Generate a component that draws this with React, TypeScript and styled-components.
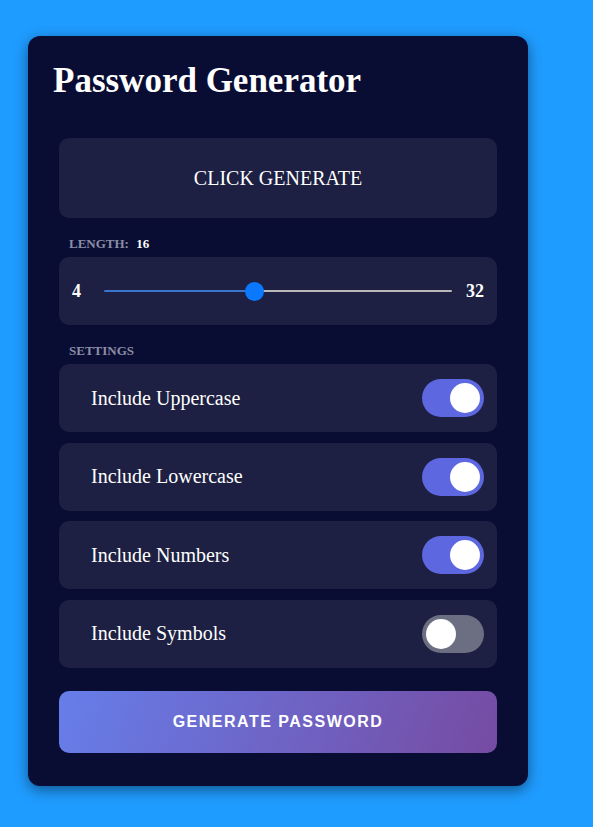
import { useState } from "react";
import styled, { createGlobalStyle } from "styled-components";

const GlobalStyle = createGlobalStyle`
  body {
    margin: 0;
    background: #1f9cff;
    font-family: "Liberation Serif", "Times New Roman", serif;
  }
`;

const MIN = 4;
const MAX = 32;

const options = [
  { key: "upper", label: "Include Uppercase" },
  { key: "lower", label: "Include Lowercase" },
  { key: "numbers", label: "Include Numbers" },
  { key: "symbols", label: "Include Symbols" },
];

export default function App() {
  const [length, setLength] = useState(16);
  const [flags, setFlags] = useState<Record<string, boolean>>({
    upper: true,
    lower: true,
    numbers: true,
    symbols: false,
  });

  const pct = ((length - MIN) / (MAX - MIN)) * 100;

  return (
    <>
      <GlobalStyle />
      <SPage>
        <SCard>
          <STitle>Password Generator</STitle>
          <SBody>
            <SResult>CLICK GENERATE</SResult>

            <SLabel>
              Length: <SValue>{length}</SValue>
            </SLabel>
            <SSliderBox>
              <SBound>{MIN}</SBound>
              <SRange
                type="range"
                min={MIN}
                max={MAX}
                value={length}
                onChange={(e) => setLength(Number(e.target.value))}
                style={{
                  background: `linear-gradient(to right, #3a74cc ${pct}%, #b8b8b8 ${pct}%)`,
                }}
              />
              <SBound>{MAX}</SBound>
            </SSliderBox>

            <SLabel>Settings</SLabel>
            <SSettings>
              {options.map((o) => (
                <SSetting key={o.key}>
                  <SSettingText>{o.label}</SSettingText>
                  <SSwitch
                    $on={flags[o.key]}
                    onClick={() => setFlags({ ...flags, [o.key]: !flags[o.key] })}
                  >
                    <SKnob />
                  </SSwitch>
                </SSetting>
              ))}
            </SSettings>

            <SGenerate>Generate Password</SGenerate>
          </SBody>
        </SCard>
      </SPage>
    </>
  );
}

const SPage = styled.div`
  padding: 36px 0 41px 28px;
`;

const SCard = styled.div`
  width: 500px;
  box-sizing: border-box;
  padding: 25px 25px 33px;
  background: #0a0d33;
  border-radius: 12px;
  box-shadow: 0 4px 14px rgba(0, 0, 0, 0.45);
`;

const STitle = styled.h1`
  margin: 0;
  font-size: 35px;
  font-weight: bold;
  color: #fff;
  line-height: 39px;
`;

const SBody = styled.div`
  padding: 38px 6px 0;
`;

const SResult = styled.div`
  height: 80px;
  display: flex;
  align-items: center;
  justify-content: center;
  background: #1d2042;
  border-radius: 10px;
  color: #fff;
  font-size: 20px;
`;

const SLabel = styled.div`
  margin: 19px 0 7px 10px;
  font-size: 13px;
  line-height: 13px;
  font-weight: bold;
  text-transform: uppercase;
  color: #8b8ea6;
`;

const SValue = styled.span`
  margin-left: 4px;
  color: #fff;
`;

const SSliderBox = styled.div`
  height: 68px;
  display: flex;
  align-items: center;
  padding: 0 13px;
  background: #1d2042;
  border-radius: 10px;
`;

const SBound = styled.span`
  color: #fff;
  font-size: 18px;
  font-weight: bold;
  width: 24px;
  &:last-child {
    text-align: right;
  }
`;

const SRange = styled.input`
  flex: 1;
  margin: 0 8px;
  height: 2.5px;
  appearance: none;
  -webkit-appearance: none;
  border-radius: 2px;
  outline: none;

  &::-webkit-slider-thumb {
    -webkit-appearance: none;
    width: 19px;
    height: 19px;
    border-radius: 50%;
    background: #0a79ff;
    cursor: pointer;
  }
`;

const SSettings = styled.div`
  display: flex;
  flex-direction: column;
  gap: 10.5px;
`;

const SSetting = styled.div`
  height: 68px;
  display: flex;
  align-items: center;
  justify-content: space-between;
  padding: 0 13px 0 32px;
  background: #1d2042;
  border-radius: 10px;
`;

const SSettingText = styled.span`
  color: #fff;
  font-size: 20px;
`;

const SSwitch = styled.button<{ $on: boolean }>`
  width: 62px;
  height: 38px;
  padding: 0 4px;
  border: none;
  border-radius: 19px;
  display: flex;
  align-items: center;
  justify-content: ${(p) => (p.$on ? "flex-end" : "flex-start")};
  background: ${(p) => (p.$on ? "#5d67df" : "#6c6e82")};
  cursor: pointer;
`;

const SKnob = styled.span`
  width: 30px;
  height: 30px;
  border-radius: 50%;
  background: #fff;
`;

const SGenerate = styled.button`
  width: 100%;
  height: 62px;
  margin-top: 23px;
  border: none;
  border-radius: 10px;
  background: linear-gradient(110deg, #667eea, #764ba2);
  color: #fff;
  font-family: "Liberation Sans", Arial, sans-serif;
  font-size: 16px;
  font-weight: bold;
  letter-spacing: 1.5px;
  text-transform: uppercase;
  cursor: pointer;
`;
